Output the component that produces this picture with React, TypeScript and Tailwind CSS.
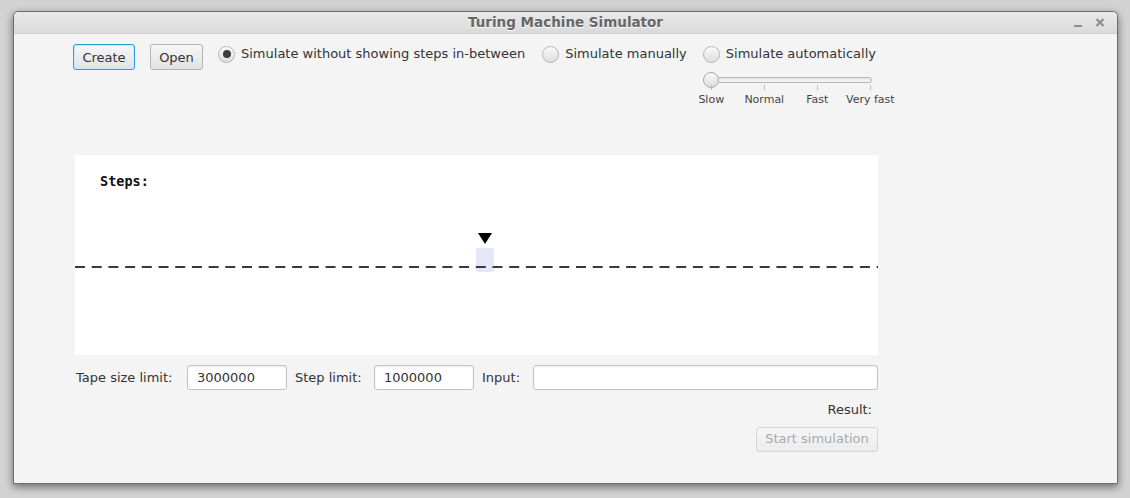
import React from 'react';

const font = { fontFamily: '"DejaVu Sans", "Liberation Sans", sans-serif' };

const Radio: React.FC<{ label: string; checked?: boolean }> = ({ label, checked }) => (
    <div className="flex items-center h-[18px]">
        <div className="w-[17px] h-[17px] rounded-full border border-[#b3b3b3] bg-gradient-to-b from-[#f9f9f9] to-[#dedede] flex items-center justify-center shadow-[inset_0_1px_0_#ffffff]">
            {checked && <div className="w-[8px] h-[8px] rounded-full bg-[#3d3d3d]" />}
        </div>
        <span className="ml-[6px] text-[13px] text-[#333]">{label}</span>
    </div>
);

const Field: React.FC<{ value?: string; width: string }> = ({ value, width }) => (
    <div className={`${width} h-[25px] bg-white border border-[#c2c2c2] rounded-[3px] shadow-[inset_0_1px_2px_rgba(0,0,0,0.08)] flex items-center px-[9px] text-[13px] text-[#333]`}>
        {value}
    </div>
);

const App: React.FC = () => {
    return (
        <div className="w-[1130px] h-[498px] bg-[#d3d3d3] pl-[13px] pt-[11px] overflow-hidden" style={font}>
            <div className="w-[1105px] h-[473px] border border-[#6e6e6e] rounded-t-[5px] bg-[#f4f4f4] shadow-[0_3px_8px_rgba(0,0,0,0.5)] flex flex-col">
                {/* title bar */}
                <div className="h-[22px] rounded-t-[5px] bg-gradient-to-b from-[#e9e9e9] to-[#dadada] border-b border-[#d0d0d0] relative flex items-center justify-center">
                    <span className="text-[13.5px] font-bold text-[#666] [text-shadow:0_1px_0_#ffffff]">Turing Machine Simulator</span>
                    <div className="absolute right-[12px] top-[5px] flex items-center gap-[12px]">
                        <svg width="10" height="12" viewBox="0 0 10 12">
                            <rect x="1" y="8" width="8" height="2" fill="#8e8e8e" />
                        </svg>
                        <svg width="10" height="12" viewBox="0 0 10 12">
                            <path d="M1.5 2 L8.5 9 M8.5 2 L1.5 9" stroke="#8e8e8e" strokeWidth="2.2" />
                        </svg>
                    </div>
                </div>

                {/* content */}
                <div className="pl-[59px] pt-[10px] flex flex-col">
                    <div className="h-[111px] flex items-start">
                        <div className="w-[62px] h-[26px] rounded-[3px] border border-[#2aa0d8] bg-gradient-to-b from-[#f7f7f7] to-[#e2e2e2] shadow-[inset_0_0_0_1px_#cfeaf7] flex items-center justify-center pt-[1px] text-[13px] text-[#333]">
                            Create
                        </div>
                        <div className="ml-[15px] w-[53px] h-[26px] rounded-[3px] border border-[#b4b4b4] bg-gradient-to-b from-[#f7f7f7] to-[#e2e2e2] flex items-center justify-center pt-[1px] text-[13px] text-[#333]">
                            Open
                        </div>
                        <div className="ml-[15px] mt-[1px]">
                            <Radio label="Simulate without showing steps in-between" checked />
                        </div>
                        <div className="ml-[17px] mt-[1px]">
                            <Radio label="Simulate manually" />
                        </div>
                        <div className="ml-[16px] mt-[1px] flex flex-col">
                            <Radio label="Simulate automatically" />
                            <div className="relative mt-[9px] w-[170px] h-[16px]">
                                <div className="absolute left-0 top-[5px] w-[169px] h-[6px] rounded-full border border-[#b8b8b8] bg-gradient-to-b from-[#e4e4e4] to-[#f7f7f7]" />
                                <div className="absolute left-0 top-0 w-[16px] h-[16px] rounded-full border border-[#a9a9a9] bg-gradient-to-b from-[#fbfbfb] to-[#dcdcdc]" />
                            </div>
                            <div className="relative w-[170px] h-[5px] mt-[-3px]">
                                <div className="absolute left-[8px] top-0 w-px h-[5px] bg-[#bdbdbd]" />
                                <div className="absolute left-[61px] top-0 w-px h-[5px] bg-[#bdbdbd]" />
                                <div className="absolute left-[114px] top-0 w-px h-[5px] bg-[#bdbdbd]" />
                                <div className="absolute left-[167px] top-0 w-px h-[5px] bg-[#bdbdbd]" />
                            </div>
                            <div className="flex -ml-[18px] mt-[2px] text-[11px] text-[#444]">
                                <span className="w-[53px] text-center">Slow</span>
                                <span className="w-[53px] text-center">Normal</span>
                                <span className="w-[53px] text-center">Fast</span>
                                <span className="w-[53px] text-center">Very fast</span>
                            </div>
                        </div>
                    </div>

                    {/* tape canvas */}
                    <div className="ml-[2px] w-[803px] h-[200px] bg-white relative">
                        <div
                            className="pl-[25px] pt-[16px] text-[13.5px] font-bold text-[#111]"
                            style={{ fontFamily: '"DejaVu Sans Mono", "Liberation Mono", monospace' }}
                        >
                            Steps:
                        </div>
                        <svg className="absolute left-0 top-0" width="803" height="200" viewBox="0 0 803 200">
                            <rect x="401" y="93" width="18" height="24" rx="2" fill="#e6e6fa" />
                            <line x1="0" y1="112" x2="803" y2="112" stroke="#3a3a3a" strokeWidth="2" strokeDasharray="10 6.7" />
                            <polygon points="403,78 417,78 410,89" fill="#000" />
                        </svg>
                    </div>

                    {/* inputs */}
                    <div className="ml-[3px] mt-[10px] flex items-center text-[13px] text-[#333]">
                        <span className="w-[111px]">Tape size limit:</span>
                        <Field value="3000000" width="w-[100px]" />
                        <span className="ml-[8px] w-[79px]">Step limit:</span>
                        <Field value="1000000" width="w-[100px]" />
                        <span className="ml-[8px] w-[51px]">Input:</span>
                        <Field width="w-[345px]" />
                    </div>
                    <div className="w-[800px] ml-[2px] mt-[10px] text-right text-[13px] text-[#333] pr-[3px]">Result:</div>
                    <div className="w-[805px] mt-[7px] flex justify-end">
                        <div className="w-[122px] h-[25px] rounded-[3px] border border-[#d6d6d6] bg-gradient-to-b from-[#f6f6f6] to-[#ececec] flex items-center justify-center text-[13px] text-[#aaa]">
                            Start simulation
                        </div>
                    </div>
                </div>
            </div>
        </div>
    );
};

export default App;
